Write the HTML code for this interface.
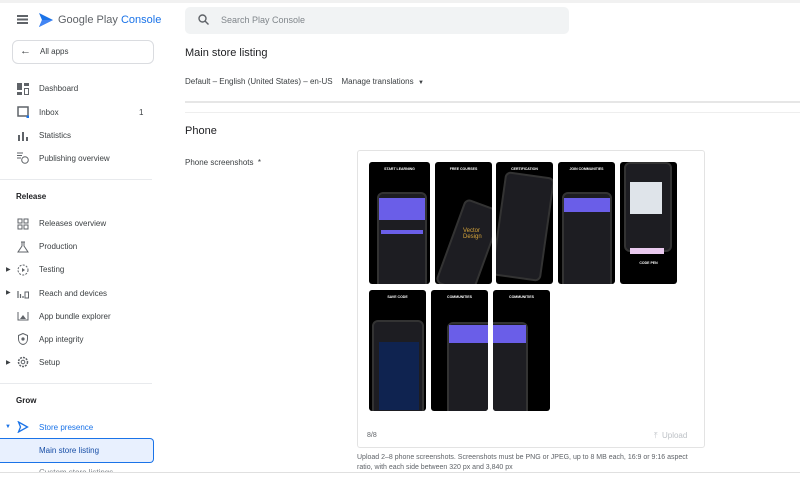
<!DOCTYPE html>
<html><head><meta charset="utf-8"><style>
*{margin:0;padding:0;box-sizing:border-box}
body{width:800px;height:497px;overflow:hidden;background:#fff;font-family:"Liberation Sans",Arial,sans-serif;color:#3c4043;position:relative}
.a{position:absolute}
.t{font-size:8px;color:#3c4043;white-space:nowrap}
.ic{position:absolute;left:17px;width:12px;height:12px}
.tile{position:absolute;background:#000;border-radius:3px;overflow:hidden}
.tile .h{position:absolute;top:5px;left:0;right:0;text-align:center;color:#fff;font-size:3.5px;font-weight:bold}
.ph{position:absolute;background:#1d1d22;border:2px solid #333;border-radius:6px}
.pb{position:absolute;background:#6a5ee8}
</style></head><body>
<div class="a" style="left:0;top:0;width:800px;height:3px;background:#f1f1f1"></div>
<div class="a" style="left:17px;top:15px;width:11px;height:1.5px;background:#5f6368;box-shadow:0 3.5px 0 #5f6368,0 7px 0 #5f6368"></div>
<svg class="a" style="left:38px;top:12px" width="16" height="16" viewBox="0 0 16 16"><path d="M1 1 L15 8 L1 15 L4 8Z" fill="#1a73e8"/><path d="M1 15 L4 8 L15 8Z" fill="#4285f4"/></svg>
<div class="a" style="left:58px;top:14px;font-size:11px;color:#5f6368">Google Play <span style="color:#1a73e8">Console</span></div>
<div class="a" style="left:12px;top:40px;width:142px;height:24px;border:1px solid #dadce0;border-radius:6px"></div>
<div class="a t" style="left:20px;top:45px;font-size:11px">←</div>
<div class="a t" style="left:40px;top:47px">All apps</div>
<svg class="ic" style="top:83px" viewBox="0 0 12 12"><rect x="0" y="0" width="5" height="7" fill="#5f6368"/><rect x="7" y="0" width="5" height="3" fill="#5f6368"/><rect x="0" y="9" width="5" height="3" fill="#5f6368"/><rect x="7.5" y="5.5" width="4" height="6" fill="none" stroke="#5f6368"/></svg>
<div class="a t" style="left:39px;top:84px">Dashboard</div>
<svg class="ic" style="top:106px" viewBox="0 0 12 12"><rect x="1" y="1" width="10" height="9" fill="none" stroke="#5f6368" stroke-width="1.5"/><circle cx="11" cy="11" r="1.6" fill="#1a73e8"/></svg>
<div class="a t" style="left:39px;top:108px">Inbox</div><div class="a t" style="left:139px;top:108px">1</div>
<svg class="ic" style="top:130px" viewBox="0 0 12 12"><rect x="1" y="5" width="2" height="6" fill="#5f6368"/><rect x="5" y="2" width="2" height="9" fill="#5f6368"/><rect x="9" y="7" width="2" height="4" fill="#5f6368"/></svg>
<div class="a t" style="left:39px;top:131px">Statistics</div>
<svg class="ic" style="top:152px" viewBox="0 0 12 12"><path d="M0 1h6M0 3.5h5M0 6h4" stroke="#5f6368"/><circle cx="8" cy="8" r="3.3" fill="none" stroke="#5f6368"/></svg>
<div class="a t" style="left:39px;top:154px">Publishing overview</div>
<div class="a" style="left:0;top:179px;width:152px;height:1px;background:#e8eaed"></div>
<div class="a t" style="left:16px;top:192px;font-weight:bold;color:#202124">Release</div>
<svg class="ic" style="top:218px" viewBox="0 0 12 12"><g fill="none" stroke="#5f6368"><rect x="1" y="1" width="4" height="4"/><rect x="7" y="1" width="4" height="4"/><rect x="1" y="7" width="4" height="4"/><rect x="7" y="7" width="4" height="4"/></g></svg>
<div class="a t" style="left:39px;top:219px">Releases overview</div>
<svg class="ic" style="top:241px" viewBox="0 0 12 12"><path d="M4 1h4M5 1v4L1 11h10L7 5V1" fill="none" stroke="#5f6368"/></svg>
<div class="a t" style="left:39px;top:242px">Production</div>
<div class="a t" style="left:6px;top:266px;font-size:6px">▶</div>
<svg class="ic" style="top:264px" viewBox="0 0 12 12"><circle cx="6" cy="6" r="5" fill="none" stroke="#5f6368" stroke-dasharray="2 1.3"/><path d="M5 4l3 2-3 2z" fill="#5f6368"/></svg>
<div class="a t" style="left:39px;top:265px">Testing</div>
<div class="a t" style="left:6px;top:289px;font-size:6px">▶</div>
<svg class="ic" style="top:287px" viewBox="0 0 12 12"><path d="M1 4v7M3.5 7v4M6 9v2" stroke="#5f6368" stroke-width="1.2"/><rect x="8" y="5" width="3.5" height="6" fill="none" stroke="#5f6368"/></svg>
<div class="a t" style="left:39px;top:289px">Reach and devices</div>
<svg class="ic" style="top:310px" viewBox="0 0 12 12"><path d="M1 2v8h10V2" fill="none" stroke="#5f6368"/><path d="M3 9l3-4 3 4z" fill="#5f6368"/></svg>
<div class="a t" style="left:39px;top:312px">App bundle explorer</div>
<svg class="ic" style="top:333px" viewBox="0 0 12 12"><path d="M6 0.5L1.5 2.5v3.5c0 3 2 5 4.5 5.5 2.5-.5 4.5-2.5 4.5-5.5V2.5z" fill="none" stroke="#5f6368"/><circle cx="6" cy="6" r="1.6" fill="#5f6368"/></svg>
<div class="a t" style="left:39px;top:335px">App integrity</div>
<div class="a t" style="left:6px;top:359px;font-size:6px">▶</div>
<svg class="ic" style="top:356px" viewBox="0 0 12 12"><circle cx="6" cy="6" r="4.5" fill="none" stroke="#5f6368" stroke-width="1.5" stroke-dasharray="2 1"/><circle cx="6" cy="6" r="1.8" fill="none" stroke="#5f6368"/></svg>
<div class="a t" style="left:39px;top:358px">Setup</div>
<div class="a" style="left:0;top:383px;width:152px;height:1px;background:#e8eaed"></div>
<div class="a t" style="left:16px;top:396px;font-weight:bold;color:#202124">Grow</div>
<div class="a t" style="left:5px;top:424px;font-size:6px;color:#1a73e8">▼</div>
<svg class="ic" style="top:421px" viewBox="0 0 12 12"><path d="M1.5 1l9 5-9 5 2-5z" fill="none" stroke="#1a73e8" stroke-width="1.3"/></svg>
<div class="a t" style="left:39px;top:423px;color:#1a73e8">Store presence</div>
<div class="a" style="left:0;top:438px;width:154px;height:25px;background:#e8f0fe;border:1px solid #1a73e8;border-left:none;border-radius:0 4px 4px 0"></div>
<div class="a t" style="left:39px;top:446px;color:#174ea6">Main store listing</div>
<div class="a t" style="left:39px;top:468px;color:#80868b">Custom store listings</div>
<div class="a" style="left:0;top:472px;width:800px;height:25px;background:#fff;border-top:1px solid #e0e0e0"></div>
<div class="a" style="left:185px;top:7px;width:384px;height:27px;background:#f1f3f4;border-radius:5px"></div>
<svg class="a" style="left:198px;top:14px" width="11" height="11" viewBox="0 0 11 11"><circle cx="4.5" cy="4.5" r="3.5" fill="none" stroke="#5f6368" stroke-width="1.4"/><path d="M7 7l3.5 3.5" stroke="#5f6368" stroke-width="1.4"/></svg>
<div class="a t" style="left:221px;top:15px;font-size:9px;color:#80868b">Search Play Console</div>
<div class="a" style="left:185px;top:47px;font-size:11px;color:#202124">Main store listing</div>
<div class="a t" style="left:185px;top:77px">Default – English (United States) – en-US&nbsp;&nbsp;&nbsp;&nbsp;Manage translations&nbsp; <span style="font-size:6px">▼</span></div>
<div class="a" style="left:185px;top:101px;width:615px;height:2px;background:#e6e6e6"></div>
<div class="a" style="left:185px;top:112px;width:615px;height:1px;background:#eee"></div>
<div class="a" style="left:185px;top:125px;font-size:11px;color:#202124">Phone</div>
<div class="a t" style="left:185px;top:158px">Phone screenshots&nbsp; *</div>
<div class="a" style="left:357px;top:150px;width:348px;height:298px;border:1px solid #e3e3e3;border-radius:3px"></div>
<div class="tile" style="left:369px;top:162px;width:61px;height:122px"><div class="h">START LEARNING</div><div class="ph" style="left:8px;top:30px;width:50px;height:100px"></div><div class="pb" style="left:10px;top:36px;width:46px;height:22px"></div><div class="pb" style="left:12px;top:68px;width:42px;height:4px"></div></div>
<div class="tile" style="left:435px;top:162px;width:57px;height:122px"><div class="h">FREE COURSES</div><div class="ph" style="left:14px;top:40px;width:40px;height:90px;transform:rotate(20deg)"></div><div class="a" style="left:28px;top:66px;font-size:6px;color:#d6a43a">Vector Design</div></div>
<div class="tile" style="left:496px;top:162px;width:57px;height:122px"><div class="h">CERTIFICATION</div><div class="ph" style="left:2px;top:12px;width:50px;height:105px;transform:rotate(8deg)"></div></div>
<div class="tile" style="left:558px;top:162px;width:57px;height:122px"><div class="h">JOIN COMMUNITIES</div><div class="ph" style="left:4px;top:30px;width:50px;height:100px"></div><div class="pb" style="left:6px;top:36px;width:46px;height:14px"></div></div>
<div class="tile" style="left:620px;top:162px;width:57px;height:122px"><div class="ph" style="left:4px;top:0;width:48px;height:90px"></div><div class="a" style="left:10px;top:20px;width:32px;height:32px;background:#dfe4ea"></div><div class="a" style="left:10px;top:86px;width:34px;height:6px;background:#e9c9ee"></div><div class="h" style="top:99px">CODE PEN</div></div>
<div class="tile" style="left:369px;top:290px;width:57px;height:121px"><div class="h">SAVE CODE</div><div class="ph" style="left:3px;top:30px;width:52px;height:100px"></div><div class="a" style="left:10px;top:52px;width:40px;height:68px;background:#0f2350"></div></div>
<div class="tile" style="left:431px;top:290px;width:57px;height:121px"><div class="h">COMMUNITIES</div><div class="ph" style="left:16px;top:32px;width:60px;height:100px"></div><div class="pb" style="left:18px;top:35px;width:58px;height:18px"></div></div>
<div class="tile" style="left:493px;top:290px;width:57px;height:121px"><div class="h">COMMUNITIES</div><div class="ph" style="left:-20px;top:32px;width:55px;height:100px"></div><div class="pb" style="left:-18px;top:35px;width:51px;height:18px"></div></div>
<div class="a t" style="left:367px;top:432px;font-size:7px;color:#5f6368">8/8</div>
<div class="a t" style="left:654px;top:431px;font-size:8px;color:#bdc1c6">⤒&nbsp; Upload</div>
<div class="a" style="left:357px;top:453px;width:342px;font-size:7px;line-height:10px;color:#5f6368">Upload 2–8 phone screenshots. Screenshots must be PNG or JPEG, up to 8 MB each, 16:9 or 9:16 aspect ratio, with each side between 320 px and 3,840 px</div>
</body></html>
